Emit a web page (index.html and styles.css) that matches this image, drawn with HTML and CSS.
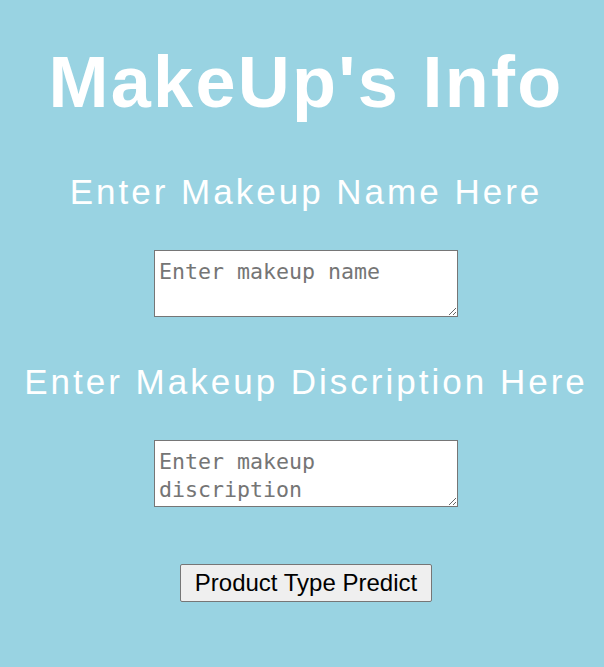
FILE: index.html
```html
<!DOCTYPE html>
<html lang="en">
<head>
<meta charset="utf-8">
<title>MakeUp's Info</title>
<link rel="stylesheet" href="styles.css">
</head>
<body>
<main class="page">
  <h1 class="title">MakeUp's Info</h1>
  <form class="form">
    <h2 class="label">Enter Makeup Name Here</h2>
    <textarea class="field field-name" placeholder="Enter makeup name"></textarea>
    <h2 class="label label-desc">Enter Makeup Discription Here</h2>
    <textarea class="field" placeholder="Enter makeup discription"></textarea>
    <button type="button" class="predict">Product Type Predict</button>
  </form>
</main>
</body>
</html>
```
FILE: styles.css
```css
html, body {
  margin: 0;
  padding: 0;
  background: #99d3e2;
  height: 100%;
}
.page {
  display: flex;
  flex-direction: column;
  align-items: center;
  padding-top: 42px;
  padding-left: 8px;
  font-family: "Liberation Sans", Arial, sans-serif;
  color: #fff;
}
.title {
  margin: 0;
  font-size: 72px;
  line-height: 80px;
  font-weight: bold;
  letter-spacing: 2.3px;
}
.form {
  display: flex;
  flex-direction: column;
  align-items: center;
  margin-top: 50px;
}
.label {
  margin: 0;
  font-size: 35px;
  line-height: 40px;
  font-weight: normal;
  letter-spacing: 3px;
  white-space: nowrap;
}
.label-desc {
  margin-top: 45px;
}
.field {
  box-sizing: border-box;
  width: 304px;
  height: 67px;
  margin-top: 38px;
  padding: 7px 4px;
  border: 1px solid #767676;
  font-family: "DejaVu Sans Mono", monospace;
  font-size: 21.6px;
  line-height: 28px;
  background: #fff;
  color: #000;
}
.field::placeholder {
  color: #757575;
}
.predict {
  margin-top: 57px;
  box-sizing: border-box;
  height: 38px;
  padding: 0 14px;
  border: 1px solid #767676;
  border-radius: 2px;
  background: #efefef;
  color: #000;
  font-family: "Liberation Sans", Arial, sans-serif;
  font-size: 24px;
}
```
